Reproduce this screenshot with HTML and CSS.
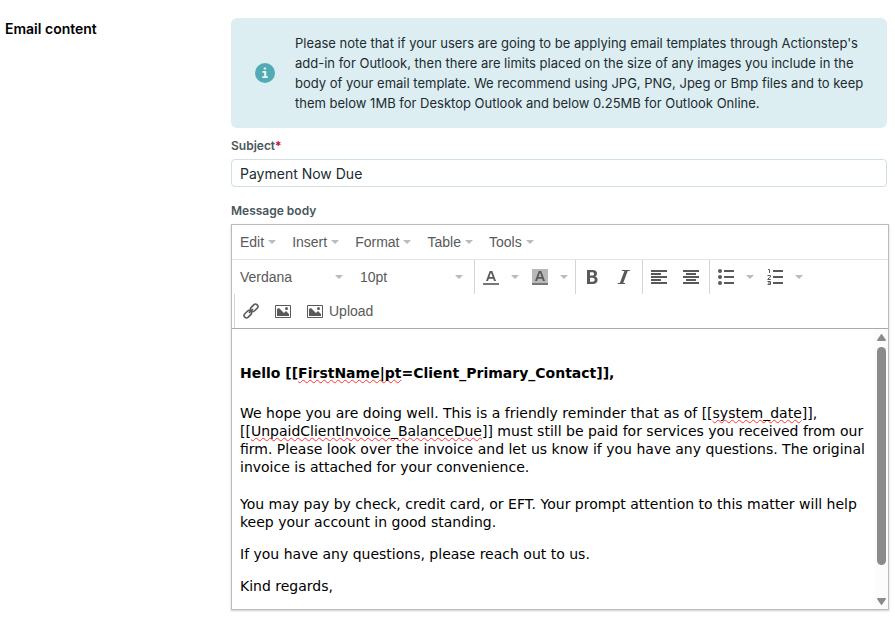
FILE: index.html
```html
<!DOCTYPE html>
<html lang="en">
<head>
    <meta charset="UTF-8">
    <meta name="viewport" content="width=device-width, initial-scale=1.0">
    <title>Email template</title>
    <link rel="stylesheet" href="styles.css">
</head>
<body>

    <main class="section">
        <h2 class="section-title">Email content</h2>

        <form class="fields">
            <div class="notice">
                <svg class="notice-icon" viewBox="0 0 19 19" aria-hidden="true">
                    <circle cx="9.500" cy="9.500" r="9.500" fill="#52abb4"/>
                    <path d="M8.300 4.200h2.200v2h-2.200zM7 7.700h3.700v5h1.500v1.600H6.800v-1.600h1.900V9.300H7z" fill="#e9f6f8"/>
                </svg>
                <p>Please note that if your users are going to be applying email templates through Actionstep's add-in for Outlook, then there are limits placed on the size of any images you include in the body of your email template. We recommend using JPG, PNG, Jpeg or Bmp files and to keep them below 1MB for Desktop Outlook and below 0.25MB for Outlook Online.</p>
            </div>

            <label class="label" for="subject">Subject<span class="required">*</span></label>
            <input class="subject" id="subject" type="text" value="Payment Now Due" required>

            <label class="label label-body" id="bodyLabel">Message body</label>
            <div class="editor">
                <div class="menubar">
                    <button type="button" class="menu">Edit<i class="caret"></i></button>
                    <button type="button" class="menu">Insert<i class="caret"></i></button>
                    <button type="button" class="menu">Format<i class="caret"></i></button>
                    <button type="button" class="menu">Table<i class="caret"></i></button>
                    <button type="button" class="menu">Tools<i class="caret"></i></button>
                </div>

                <div class="toolbar">
                    <div class="group">
                        <div class="dropdown">
                            <select aria-label="Font family"><option>Verdana</option><option>Arial</option></select>
                            <i class="caret"></i>
                        </div>
                        <div class="dropdown">
                            <select aria-label="Font size"><option>10pt</option><option>12pt</option></select>
                            <i class="caret"></i>
                        </div>
                    </div>
                    <div class="group">
                        <button type="button" class="tool" aria-label="Text color">
                            <svg viewBox="0 0 16 16"><path fill-rule="evenodd" d="M3 12 6.700 2h2.600L13 12h-2l-.8-2.300H5.800L5 12zM6.400 8h3.200L8 3.600z"/><path d="M0 14h16v2H0z" fill="#777"/></svg>
                        </button>
                        <button type="button" class="open" aria-label="Choose text color"><i class="caret"></i></button>
                        <button type="button" class="tool" aria-label="Background color">
                            <svg viewBox="0 0 16 16"><path d="M0 0h16v14H0z" fill="#b9b9b9"/><path fill-rule="evenodd" d="M3 12 6.700 2h2.600L13 12h-2l-.8-2.300H5.800L5 12zM6.400 8h3.200L8 3.600z"/><path d="M0 14h16v2H0z" fill="#777"/></svg>
                        </button>
                        <button type="button" class="open" aria-label="Choose background color"><i class="caret"></i></button>
                    </div>
                    <div class="group">
                        <button type="button" class="tool" aria-label="Bold">
                            <svg viewBox="0 0 16 16"><path fill-rule="evenodd" d="M3 1h5.500C11.500 1 13 2.400 13 4.500c0 1.500-.8 2.500-2 3 1.600.4 2.600 1.500 2.600 3.300C13.600 13.400 12 15 8.800 15H3zM6 3.200v3.400h2.200c1.200 0 1.900-.6 1.900-1.700S9.400 3.200 8.200 3.200zM6 8.800v4h2.500c1.400 0 2.200-.7 2.200-2s-.8-2-2.200-2z"/></svg>
                        </button>
                        <button type="button" class="tool" aria-label="Italic">
                            <svg viewBox="0 0 16 16"><path d="M6 1h8l-.3 1h-2L7.200 14h2l-.3 1H1.600l.3-1h2L8.400 2H5.700z"/></svg>
                        </button>
                    </div>
                    <div class="group">
                        <button type="button" class="tool" aria-label="Align left">
                            <svg viewBox="0 0 16 16"><path d="M0 1h16v2H0zM0 4h10v2H0zM0 7h16v2H0zM0 10h10v2H0zM0 13h16v2H0z"/></svg>
                        </button>
                        <button type="button" class="tool" aria-label="Align center">
                            <svg viewBox="0 0 16 16"><path d="M0 1h16v2H0zM3 4h10v2H3zM0 7h16v2H0zM3 10h10v2H3zM0 13h16v2H0z"/></svg>
                        </button>
                    </div>
                    <div class="group">
                        <button type="button" class="tool" aria-label="Bullet list">
                            <svg viewBox="0 0 16 16"><circle cx="2" cy="2" r="2"/><circle cx="2" cy="8" r="2"/><circle cx="2" cy="14" r="2"/><path d="M6 1h10v2H6zM6 7h10v2H6zM6 13h10v2H6z"/></svg>
                        </button>
                        <button type="button" class="open" aria-label="Bullet styles"><i class="caret"></i></button>
                        <button type="button" class="tool" aria-label="Numbered list">
                            <svg viewBox="0 0 16 16"><path d="M6 1h10v2H6zM6 7h10v2H6zM6 13h10v2H6z"/><path d="M1 .5h1.500V4M.5 6.500h3V8l-2.700 2v.5h3M.5 12.500h3v3h-3M1 14h2.500" fill="none" stroke="#595959"/></svg>
                        </button>
                        <button type="button" class="open" aria-label="Number styles"><i class="caret"></i></button>
                    </div>
                    <div class="group">
                        <button type="button" class="tool" aria-label="Insert link">
                            <svg viewBox="0 0 16 16"><g fill="none" stroke="#595959" stroke-width="1.600"><rect x="-4.200" y="-2.400" width="8.400" height="4.800" rx="2.400" transform="translate(11.200 4.800) rotate(-45)"/><rect x="-4.200" y="-2.400" width="8.400" height="4.800" rx="2.400" transform="translate(4.800 11.200) rotate(-45)"/><path d="M6 10l4-4"/></g></svg>
                        </button>
                        <button type="button" class="tool" aria-label="Insert image">
                            <svg viewBox="0 0 16 16"><path d="M.5 2.500h15v12H.5z" fill="none" stroke="#595959"/><path d="M2 13V6l2-1 5 5 2-2 3 3v2z"/><circle cx="11.500" cy="5.500" r="1.500"/></svg>
                        </button>
                        <button type="button" class="tool">
                            <svg viewBox="0 0 16 16"><path d="M.5 2.500h15v12H.5z" fill="none" stroke="#595959"/><path d="M2 13V6l2-1 5 5 2-2 3 3v2z"/><circle cx="11.500" cy="5.500" r="1.500"/></svg>
                            Upload
                        </button>
                    </div>
                </div>

                <div class="content">
                    <div class="message" contenteditable="true" role="textbox" aria-multiline="true" aria-labelledby="bodyLabel" spellcheck="false">
                        <p class="greeting">Hello [[<span class="misspelt">FirstName|pt</span>=Client_Primary_Contact]],</p>
                        <p class="reminder">We hope you are doing well. This is a friendly reminder that as of [[<span class="misspelt">system_date</span>]], [[<span class="misspelt">UnpaidClientInvoice_BalanceDue</span>]] must still be paid for services you received from our firm. Please look over the invoice and let us know if you have any questions. The original invoice is attached for your convenience.</p>
                        <p>You may pay by check, credit card, or EFT. Your prompt attention to this matter will help keep your account in good standing.</p>
                        <p>If you have any questions, please reach out to us.</p>
                        <p>Kind regards,</p>
                    </div>
                    <div class="scrollbar" aria-hidden="true">
                        <svg viewBox="0 0 9 7"><path d="M4.500 0Q5 0 5.500 1L9 6q0 1-1 1H1Q0 7 0 6l3.500-5Q4 0 4.500 0z"/></svg>
                        <div class="thumb"></div>
                        <svg viewBox="0 0 9 7"><path d="M4.500 7Q5 7 5.500 6L9 1q0-1-1-1H1Q0 0 0 1l3.500 5Q4 7 4.500 7z"/></svg>
                    </div>
                </div>
            </div>
        </form>
    </main>

</body>
</html>
```
FILE: styles.css
```css
* {
    box-sizing: border-box;
}
body {
    margin: 0;
    padding: 18px 8px 24px 5px;
    background-color: #fff;
    color: #212b30;
    font-family: Inter, sans-serif;
}
p {
    margin: 0;
}
button {
    border: none;
    padding: 0;
    background: none;
    cursor: pointer;
}

.section {
    display: grid;
    grid-template-columns: 226px 1fr;
}
.section-title {
    margin: 0;
    color: #000;
    font-size: 14px;
    font-weight: 600;
    line-height: 22px;
}
.fields {
    display: flex;
    flex-direction: column;
    min-width: 0;
}

/* Info notice */
.notice {
    display: flex;
    align-items: center;
    gap: 20px;
    padding: 15px 16px 15px 24px;
    border-radius: 6px;
    background-color: #dceef2;
    font-size: 13px;
    line-height: 20px;
}
.notice-icon {
    flex: none;
    width: 20px;
    height: 20px;
}

/* Fields */
.label {
    margin-top: 8px;
    color: #48565c;
    font-size: 12px;
    font-weight: 600;
    line-height: 20px;
}
.label-body {
    margin-top: 14px;
}
.required {
    color: #d0021b;
}
.subject {
    height: 28px;
    margin-top: 3px;
    padding: 0 8px;
    border: 1px solid #d0dfe2;
    border-radius: 4px;
    color: #212b30;
    font-family: Inter, sans-serif;
    font-size: 14px;
}

/* Editor */
.editor {
    margin: 3px -2px 0 0;
    border: 1px solid #bbb;
    box-shadow: 0 1px 2px rgba(0, 0, 0, 0.2);
}
.caret {
    flex: none;
    border: 4px solid transparent;
    border-top-color: #b5bcc2;
    border-bottom: none;
}
.menubar {
    display: flex;
    height: 35px;
    border-bottom: 1px solid #e2e2e2;
}
.menu,
.tool,
.dropdown select {
    color: #595959;
    font-family: "Liberation Sans", Arial, sans-serif;
    font-size: 14px;
}
.menu {
    display: flex;
    align-items: center;
    gap: 4px;
    padding: 0 8px;
}
.toolbar {
    display: flex;
    flex-wrap: wrap;
    border-bottom: 1px solid #aaa;
}
.group {
    display: flex;
    height: 34px;
}
.group + .group {
    margin-left: 2px;
    border-left: 1px solid #d5d5d5;
}
.dropdown {
    display: grid;
    align-items: center;
    width: 120px;
}
.dropdown select,
.dropdown .caret {
    grid-area: 1 / 1;
}
.dropdown select {
    height: 34px;
    padding: 0 20px 0 8px;
    border: none;
    background: none;
    appearance: none;
}
.dropdown .caret {
    justify-self: end;
    margin-right: 9px;
    pointer-events: none;
}
.tool {
    display: flex;
    align-items: center;
    gap: 6px;
    padding: 0 8px;
}
.tool svg {
    width: 16px;
    height: 16px;
    fill: #595959;
}
.open {
    display: flex;
    align-items: center;
    width: 17px;
    padding-left: 4px;
}

/* Message */
.content {
    display: flex;
}
.message {
    flex: 1;
    padding: 35px 8px 14px;
    outline: none;
    color: #000;
    font-family: Verdana, "DejaVu Sans", sans-serif;
    font-size: 14px;
    line-height: 18px;
}
.message p + p {
    margin-top: 14px;
}
.message .greeting {
    font-weight: bold;
}
.message .greeting + p {
    margin-top: 22px;
}
.message .reminder + p {
    margin-top: 19px;
}
.misspelt {
    text-decoration: underline wavy #f33 1px;
    text-decoration-skip-ink: none;
}
.scrollbar {
    display: flex;
    flex-direction: column;
    align-items: center;
    width: 14px;
    padding: 5px 0 4px;
    background-color: #fcfcfc;
}
.scrollbar svg {
    width: 9px;
    height: 7px;
    fill: #8b8b8b;
}
.thumb {
    flex: 1;
    width: 9px;
    margin: 6px 0 33px;
    border-radius: 5px;
    background-color: #8b8b8b;
}
```
